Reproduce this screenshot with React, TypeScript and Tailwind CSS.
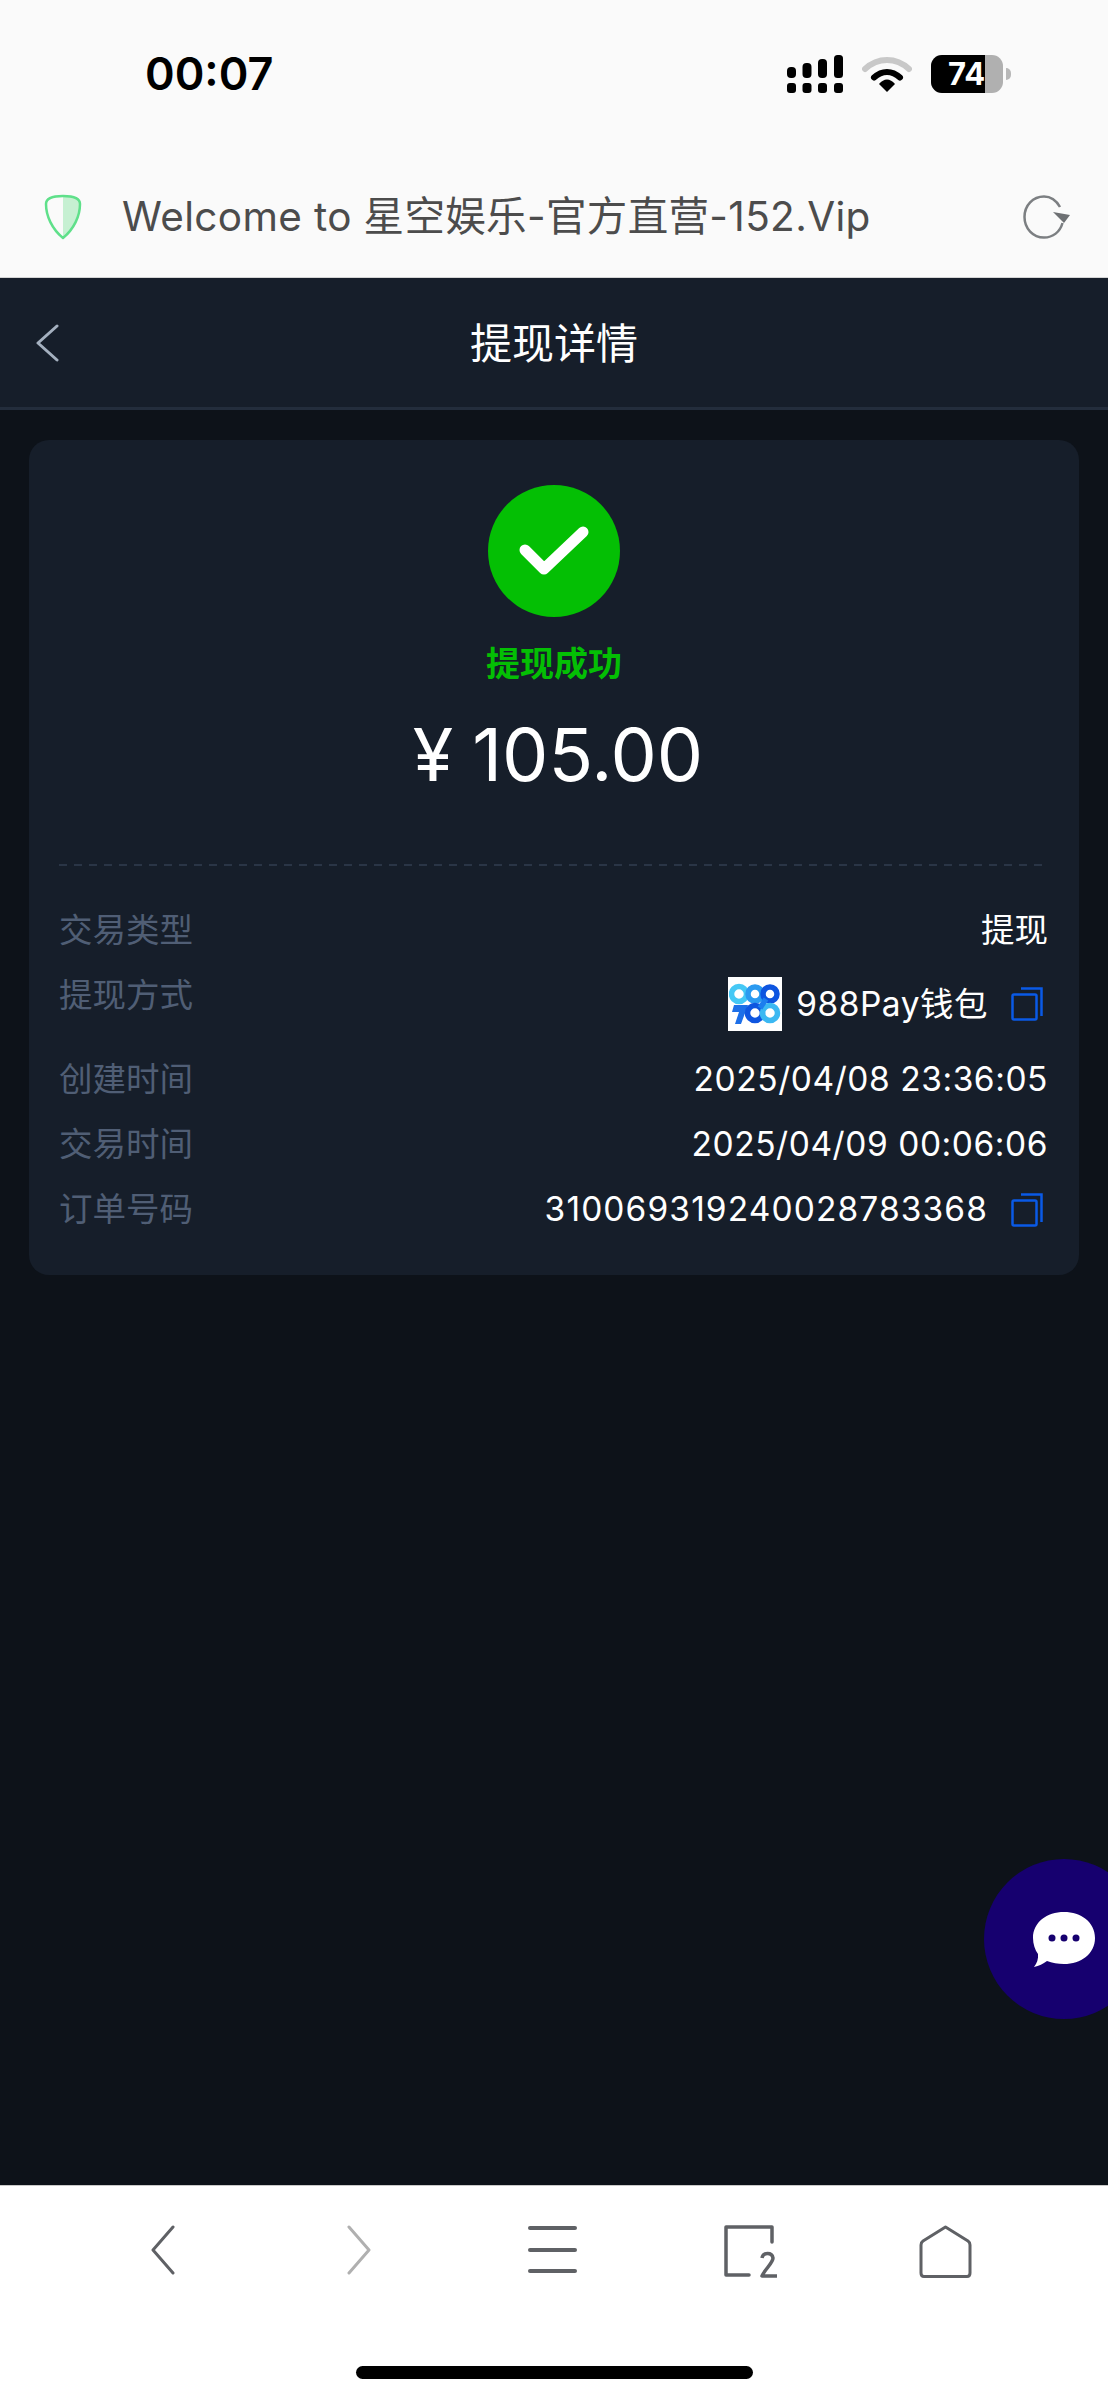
/**
 * Withdrawal detail page inside an in-app mobile browser frame.
 */

const FONT = "font-['Inter','Noto_Sans_CJK_SC',sans-serif]";

const rows = [
  { label: "创建时间", value: "2025/04/08 23:36:05" },
  { label: "交易时间", value: "2025/04/09 00:06:06" },
];

function SignalIcon() {
  return (
    <svg width="56" height="38" viewBox="0 0 56 38" fill="#000">
      <rect x="0" y="12" width="9" height="11" rx="4" />
      <rect x="15.5" y="8" width="9" height="15" rx="4" />
      <rect x="31" y="4" width="9" height="19" rx="4" />
      <rect x="47" y="0" width="9" height="23" rx="3.5" />
      <rect x="0" y="28" width="9" height="10" rx="3" />
      <rect x="15.5" y="28" width="9" height="10" rx="3" />
      <rect x="31" y="28" width="9" height="10" rx="3" />
      <rect x="47" y="28" width="9" height="10" rx="3" />
    </svg>
  );
}

function WifiIcon() {
  return (
    <svg width="50" height="37" viewBox="0 0 50 37" fill="none">
      <path d="M3 14C16 2 34 2 47 14" stroke="#c8c8c8" strokeWidth="6" strokeLinecap="round" />
      <path d="M12 22.5C20 15 30 15 38 22.5" stroke="#000" strokeWidth="6" strokeLinecap="round" />
      <path d="M17 29C22 23 28 23 33 29L25 37Z" fill="#000" />
    </svg>
  );
}

function BatteryIcon() {
  return (
    <div className="flex items-center">
      <div className="relative h-[38px] w-[72px] rounded-[11px] bg-[#b0b0b0]">
        <div className="h-full w-[54px] rounded-l-[11px] bg-black" />
        <span className="absolute left-[17px] top-0 text-[31px] font-bold leading-[38px] text-white">74</span>
      </div>
      <div className="ml-[3px] h-[12px] w-[5px] rounded-r-full bg-[#b8b8b8]" />
    </div>
  );
}

function ShieldIcon() {
  return (
    <svg width="38" height="46" viewBox="0 0 38 46" fill="none">
      <path d="M19 2C10 2 2 4 2 10C2 22 8 35 19 44Z" fill="#fafafa" />
      <path d="M19 2C28 2 36 4 36 10C36 22 30 35 19 44Z" fill="#c6f0d2" />
      <path
        d="M19 2C28 2 36 4 36 10C36 22 30 35 19 44C8 35 2 22 2 10C2 4 10 2 19 2Z"
        stroke="#5fe08a"
        strokeWidth="2.5"
        strokeLinejoin="round"
      />
    </svg>
  );
}

function ReloadIcon() {
  return (
    <svg width="48" height="44" viewBox="0 0 48 44" fill="none">
      <path
        d="M37 12C33 5 27 1.500 21 1.500C10 1.500 1.500 10.500 1.500 22C1.500 33.500 10 42.500 21 42.500C30 42.500 37 37 39.500 28"
        stroke="#7c7f82"
        strokeWidth="2.500"
      />
      <path d="M30 17L47 20L41 28Z" fill="#6d7073" />
    </svg>
  );
}

function CopyIcon() {
  return (
    <svg className="block" width="32" height="34" viewBox="0 0 32 34" fill="none" stroke="#0a5ae6" strokeWidth="2.500">
      <rect x="1.500" y="7.500" width="24" height="25" rx="1.500" />
      <path d="M10 1.500H30.500V29" />
    </svg>
  );
}

// 988 Pay mark, small enough that only the overlapping rings read
function PayLogo() {
  return (
    <div className="flex h-[54px] w-[54px] shrink-0 items-center justify-center bg-white">
      <svg width="52" height="42" viewBox="0 0 52 42" fill="none" strokeWidth="5.500">
        <circle cx="10" cy="11" r="7.500" stroke="#45c8f5" />
        <path d="M5 22H19L12 41H6L10 29H3Z" fill="#1d6fe8" stroke="none" />
        <circle cx="26" cy="11" r="7" stroke="#2b9af0" />
        <circle cx="41" cy="11" r="7" stroke="#0e55e0" />
        <circle cx="26" cy="30" r="7.500" stroke="#0e55e0" />
        <circle cx="41" cy="30" r="7.500" stroke="#3bb8f2" />
        <path d="M31 25L37 16" stroke="#1c7eee" />
      </svg>
    </div>
  );
}

function ChatBubbleIcon() {
  return (
    <svg width="62" height="55" viewBox="0 0 62 55" fill="none">
      <path
        d="M31 0C48 0 62 10 62 26C62 42 48 52 31 52C25 52 19 51 14 49C10 52 6 54 1 55C4 51 5.500 47 5 42C2 38 0 32 0 26C0 10 14 0 31 0Z"
        fill="#fff"
      />
      <circle cx="19" cy="26" r="3.500" fill="#16006f" />
      <circle cx="31" cy="26" r="3.500" fill="#16006f" />
      <circle cx="43" cy="26" r="3.500" fill="#16006f" />
    </svg>
  );
}

function BottomBar() {
  return (
    <div className="border-t border-[#c9c9c9] bg-white">
      <div className="flex h-[180px] items-start pl-[151px] pt-[39px]">
        <svg width="24" height="50" viewBox="0 0 24 50" fill="none" stroke="#5f6165" strokeWidth="3" strokeLinecap="round" strokeLinejoin="round">
          <path d="M22 2L2 25L22 48" />
        </svg>
        <svg className="ml-[172px]" width="24" height="50" viewBox="0 0 24 50" fill="none" stroke="#b0b0b0" strokeWidth="3" strokeLinecap="round" strokeLinejoin="round">
          <path d="M2 2L22 25L2 48" />
        </svg>
        <div className="ml-[157px] mt-[1px] flex h-[47px] w-[49px] flex-col justify-between">
          <div className="h-[4px] rounded-full bg-[#5f6165]" />
          <div className="h-[4px] rounded-full bg-[#5f6165]" />
          <div className="h-[4px] rounded-full bg-[#5f6165]" />
        </div>
        <svg className="ml-[147px]" width="55" height="54" viewBox="0 0 55 54" fill="none" stroke="#5f6165" strokeWidth="3.500" strokeLinecap="round" strokeLinejoin="round">
          <path d="M48 17V2H2V50H25" />
          <path d="M38 33C39 27 48 27 49 33C49 38 41 44 38 51H53" strokeLinecap="butt" />
        </svg>
        <svg className="ml-[140px]" width="53" height="54" viewBox="0 0 53 54" fill="none" stroke="#5f6165" strokeWidth="3" strokeLinejoin="round">
          <path d="M26.500 2L49 16C50.500 17 51 18.500 51 20V48C51 50.500 50 51.500 48 51.500H5C3 51.500 2 50.500 2 48V20C2 18.500 2.500 17 4 16Z" />
        </svg>
      </div>
      <div className="flex h-[34px] justify-center">
        <div className="h-[13px] w-[397px] rounded-full bg-black" />
      </div>
    </div>
  );
}

export default function App() {
  return (
    <div className={`${FONT} relative flex h-[2400px] w-[1108px] flex-col overflow-hidden bg-[#0d1219]`}>
      {/* Browser chrome */}
      <div className="h-[278px] shrink-0 border-b border-[#d4d4d4] bg-[#fafafa]">
        <div className="flex h-[148px] items-start pt-[55px]">
          <span className="ml-[145px] w-[127px] whitespace-nowrap text-[45px] font-semibold leading-[38px] text-black">00:07</span>
          <div className="ml-[515px] flex gap-[19px]">
            <SignalIcon />
            <WifiIcon />
            <BatteryIcon />
          </div>
        </div>
        <div className="flex items-center pl-[44px] pt-[44px]">
          <ShieldIcon />
          <span className="ml-[40px] text-[40.5px] leading-[50px] tracking-[0.35px] text-[#4c4c4c]">Welcome to 星空娱乐-官方直营-152.Vip</span>
          <div className="ml-auto mr-[37px]">
            <ReloadIcon />
          </div>
        </div>
      </div>

      {/* Page header */}
      <div className="relative flex h-[132px] shrink-0 items-center justify-center border-b-[3px] border-[#232d3c] bg-[#161e2a] pt-[3px]">
        <svg className="absolute left-[35px] top-[46px]" width="24" height="38" viewBox="0 0 24 38" fill="none" stroke="#a4b0bf" strokeWidth="3" strokeLinecap="round" strokeLinejoin="round">
          <path d="M22 2L3 19L22 36" />
        </svg>
        <span className="text-[42px] leading-none text-white">提现详情</span>
      </div>

      {/* Detail card */}
      <div className="mx-[29px] mt-[30px] h-[835px] rounded-[20px] bg-[#161e2a] px-[30px]">
        <div className="flex flex-col items-center pt-[45px]">
          <div className="flex h-[132px] w-[132px] items-center justify-center rounded-full bg-[#04bf04]">
            <svg width="70" height="52" viewBox="0 0 70 52" fill="none" stroke="#fff" strokeWidth="11" strokeLinecap="round" strokeLinejoin="round">
              <path d="M6 25L25 44L64 7" />
            </svg>
          </div>
          <span className="mt-[27px] text-[34px] font-bold leading-[40px] text-[#04bf04]">提现成功</span>
          <span className="mt-[29px] flex text-[73.5px] leading-[84px] text-white">
            <span className="ml-[8px] mr-[19px]">¥</span>
            <span>105.00</span>
          </span>
        </div>

        <div className="mt-[67px] h-[2px] bg-[repeating-linear-gradient(90deg,#2a3546_0,#2a3546_8px,transparent_8px,transparent_15px)]" />

        <div className="mt-[32px] text-[33.5px] leading-[65px]">
          <div className="flex h-[65px] justify-between pr-[1px]">
            <span className="text-[#505e75]">交易类型</span>
            <span className="text-white">提现</span>
          </div>
          <div className="flex h-[84px] items-start justify-between">
            <span className="text-[#505e75]">提现方式</span>
            <div className="mt-[14px] flex items-center">
              <PayLogo />
              <span className="ml-[14px] leading-[54px] tracking-[0.5px] text-white">988Pay钱包</span>
              <span className="ml-[23px] mr-[6px]">
                <CopyIcon />
              </span>
            </div>
          </div>
          {rows.map((row) => (
            <div key={row.label} className="flex h-[65px] justify-between pr-[1px]">
              <span className="text-[#505e75]">{row.label}</span>
              <span className="tracking-[0.55px] text-white">{row.value}</span>
            </div>
          ))}
          <div className="flex h-[65px] items-center justify-between">
            <span className="text-[#505e75]">订单号码</span>
            <div className="flex items-center">
              <span className="tracking-[1.1px] text-white">310069319240028783368</span>
              <span className="ml-[23px] mr-[6px]">
                <CopyIcon />
              </span>
            </div>
          </div>
        </div>
      </div>

      {/* Floating support button */}
      <div className="absolute left-[984px] top-[1859px] flex h-[160px] w-[160px] items-center rounded-full bg-[#16006f] pl-[49px]">
        <ChatBubbleIcon />
      </div>

      <div className="mt-auto">
        <BottomBar />
      </div>
    </div>
  );
}
